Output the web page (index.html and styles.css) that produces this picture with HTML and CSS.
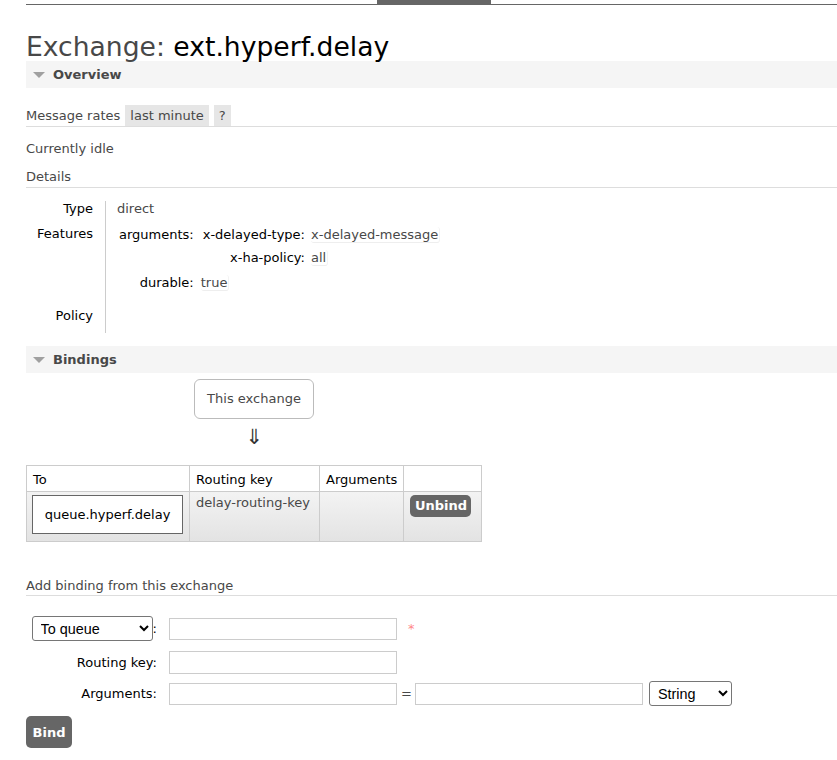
FILE: index.html
```html
<!DOCTYPE html>
<html lang="en">
<head>
<meta charset="utf-8">
<title>Exchange: ext.hyperf.delay</title>
<link rel="stylesheet" href="styles.css">
</head>
<body>
<div class="topnav"><div class="tab"></div></div>
<main class="main">
  <h1 class="title">Exchange: <b>ext.hyperf.delay</b></h1>

  <section>
    <h2 class="section-head"><span class="tri"></span>Overview</h2>
    <h3 class="rates-head"><span>Message rates</span><span class="opt">last minute</span><span class="opt">?</span></h3>
    <p class="idle">Currently idle</p>
    <h3 class="details-head">Details</h3>
    <div class="facts">
      <div class="fact-label row-type">Type</div>
      <div class="fact-value row-type">direct</div>
      <div class="fact-label row-features">Features</div>
      <div class="fact-value row-features">
        <div class="mini">
          <div class="mini-label">arguments:</div>
          <div class="args">
            <div class="args-label">x-delayed-type:</div>
            <div><span class="val">x-delayed-message</span></div>
            <div class="args-label">x-ha-policy:</div>
            <div><span class="val">all</span></div>
          </div>
          <div class="mini-label">durable:</div>
          <div><span class="val">true</span></div>
        </div>
      </div>
      <div class="fact-label row-policy">Policy</div>
      <div class="fact-value row-policy"></div>
    </div>
  </section>

  <section class="bindings-section">
    <h2 class="section-head"><span class="tri"></span>Bindings</h2>
    <div class="bindings">
      <div class="object">This exchange</div>
      <div class="arrow">&dArr;</div>
      <table class="list">
        <thead>
          <tr>
            <th class="c1">To</th>
            <th class="c2">Routing key</th>
            <th class="c3">Arguments</th>
            <th class="c4"></th>
          </tr>
        </thead>
        <tbody>
          <tr>
            <td class="c1"><span class="queue-box">queue.hyperf.delay</span></td>
            <td class="c2">delay-routing-key</td>
            <td class="c3"></td>
            <td class="c4"><button class="btn-small" type="button">Unbind</button></td>
          </tr>
        </tbody>
      </table>
    </div>

    <h3 class="add-head">Add binding from this exchange</h3>
    <form class="bind-form">
      <div class="form-row row1">
        <div class="form-label">
          <select class="sel sel-dest"><option>To queue</option><option>To exchange</option></select>:
        </div>
        <input class="inp" type="text">
        <span class="mand">*</span>
      </div>
      <div class="form-row row2">
        <label class="form-label">Routing key:</label>
        <input class="inp" type="text">
      </div>
      <div class="form-row row3">
        <label class="form-label">Arguments:</label>
        <input class="inp" type="text">
        <span class="eq">=</span>
        <input class="inp" type="text">
        <select class="sel sel-type"><option>String</option><option>Number</option><option>Boolean</option><option>List</option></select>
      </div>
      <button class="btn-bind" type="button">Bind</button>
    </form>
  </section>
</main>
</body>
</html>
```
FILE: styles.css
```css
html, body {
  background: #fff;
}
body {
  margin: 0;
  font-family: "DejaVu Sans", Verdana, sans-serif;
  font-size: 13px;
  line-height: 15px;
  color: #484848;
}

.topnav {
  margin-left: 26px;
  height: 4px;
  border-bottom: 1px solid #666;
}
.tab {
  margin-left: 351px;
  width: 114px;
  height: 5px;
  background: #666;
}

.main {
  padding-left: 26px;
}

.title {
  margin: 28px 0 0;
  font-size: 26.6px;
  line-height: 28px;
  font-weight: normal;
  color: #484848;
}
.title b {
  font-weight: normal;
  color: #000;
}

.section-head {
  margin: 0;
  height: 27px;
  display: flex;
  align-items: center;
  padding-left: 7px;
  background: #f5f5f5;
  font-size: 13px;
  font-weight: bold;
  color: #484848;
}
.tri {
  width: 0;
  height: 0;
  border-left: 6px solid transparent;
  border-right: 6px solid transparent;
  border-top: 6px solid #a0a0a0;
  margin-right: 8px;
}

.rates-head {
  margin: 17px 0 0;
  display: flex;
  gap: 5px;
  font-size: 13px;
  font-weight: normal;
  line-height: 21px;
  border-bottom: 1px solid #ddd;
}
.opt {
  background: #e6e6e6;
  padding: 0 5px;
}

.idle {
  margin: 14px 0 0;
}

.details-head {
  margin: 10px 0 0;
  font-size: 13px;
  font-weight: normal;
  line-height: 21px;
  border-bottom: 1px solid #ddd;
}

.facts {
  margin-top: 13px;
  display: grid;
  grid-template-columns: 80px auto;
  justify-content: start;
}
.fact-label {
  text-align: right;
  color: #000;
  padding-right: 12px;
  border-right: 1px solid #ccc;
}
.fact-value {
  padding-left: 11px;
}
.row-type {
  padding-bottom: 10px;
}
.row-features {
  padding-bottom: 18px;
}
.row-policy {
  padding-bottom: 10px;
}
.fact-value.row-features {
  padding-top: 1px;
}

.mini {
  margin-left: 2px;
  display: grid;
  grid-template-columns: auto auto;
  column-gap: 7px;
  row-gap: 10px;
  justify-content: start;
}
.mini-label {
  text-align: right;
  color: #000;
}
.args {
  margin-left: 2px;
  display: grid;
  grid-template-columns: auto auto;
  column-gap: 6px;
  row-gap: 8px;
  justify-content: start;
}
.args-label {
  text-align: right;
  color: #000;
}
.val {
  border-bottom: 1px solid #eee;
  border-right: 1px solid #f3f3f3;
  border-radius: 3px;
  padding-right: 1px;
}

.bindings-section > .section-head {
  margin-top: 13px;
}

.bindings {
  width: 456px;
  display: flex;
  flex-direction: column;
  align-items: center;
}
.object {
  margin-top: 6px;
  border: 1px solid #bbb;
  border-radius: 6px;
  padding: 11px 12px;
  line-height: 16px;
  color: #484848;
}
.arrow {
  height: 46px;
  font-size: 21px;
  line-height: 36px;
  color: #333;
}

.list {
  align-self: stretch;
  table-layout: fixed;
  width: 456px;
  border-collapse: separate;
  border-spacing: 0;
  border-left: 1px solid #ccc;
  border-top: 1px solid #ccc;
}
.list th,
.list td {
  box-sizing: border-box;
  border-right: 1px solid #ccc;
  border-bottom: 1px solid #ccc;
  text-align: left;
  vertical-align: top;
  font-size: 13px;
  line-height: 15px;
}
.list th {
  font-weight: normal;
  color: #000;
  height: 26px;
  padding: 6px 6px 4px;
  background: #fff;
}
.list td {
  height: 50px;
  padding: 3px 6px;
  background: linear-gradient(#f3f3f3, #e3e3e3);
  color: #484848;
}
.list .c1 { width: 163px; }
.list .c2 { width: 130px; }
.list .c3 { width: 84px; }
.list .c4 { width: 78px; }
.list td.c1 {
  padding-left: 5px;
  padding-right: 5px;
}
.queue-box {
  display: block;
  box-sizing: border-box;
  width: 151px;
  padding: 11px 0;
  border: 1px solid #666;
  background: #fff;
  color: #000;
  text-align: center;
}
.btn-small {
  display: block;
  font-family: "DejaVu Sans", Verdana, sans-serif;
  font-size: 13px;
  font-weight: bold;
  line-height: 16px;
  color: #fff;
  background: #666;
  border: 0;
  border-radius: 5px;
  padding: 3px 5px 3px;
  width: 61px;
  height: 22px;
  cursor: pointer;
}

.add-head {
  margin: 36px 0 0;
  font-size: 13px;
  font-weight: normal;
  line-height: 15px;
  padding-bottom: 2px;
  border-bottom: 1px solid #ddd;
}

.bind-form {
  margin: 20px 0 0;
  display: flex;
  flex-direction: column;
  align-items: flex-start;
}
.form-row {
  display: flex;
  align-items: center;
  height: 25px;
}
.row2 {
  margin-top: 9px;
}
.row3 {
  margin-top: 6px;
}
.form-label {
  box-sizing: border-box;
  width: 137px;
  padding-right: 6px;
  text-align: right;
  color: #000;
  display: flex;
  justify-content: flex-end;
  align-items: center;
}
.inp {
  box-sizing: border-box;
  width: 228px;
  height: 23px;
  margin: 0 0 0 6px;
  border: 1px solid #ccc;
  background: #fff;
  padding: 1px 4px;
  font-family: "DejaVu Sans", Verdana, sans-serif;
  font-size: 13px;
}
.row1 .inp,
.row3 .inp {
  height: 22px;
}
.mand {
  margin-left: 11px;
  color: #f88;
  font-size: 13px;
}
.eq {
  margin: 0 3px 0 4px;
  color: #484848;
}
.row3 .eq + .inp {
  margin-left: 0;
}
.sel {
  box-sizing: border-box;
  height: 25px;
  font-family: "Liberation Sans", Arial, sans-serif;
  font-size: 14.4px;
  color: #000;
  background: #fff;
  border: 1px solid #767676;
  border-radius: 3px;
  padding: 0 2px 0 4px;
  margin: 0;
}
.sel-dest {
  width: 121px;
}
.sel-type {
  width: 83px;
  margin-left: 6px;
}
.btn-bind {
  margin-top: 10px;
  width: 46px;
  height: 32px;
  padding: 0;
  border: 0;
  border-radius: 5px;
  background: #666;
  color: #fff;
  font-family: "DejaVu Sans", Verdana, sans-serif;
  font-size: 13px;
  font-weight: bold;
  cursor: pointer;
}
```
